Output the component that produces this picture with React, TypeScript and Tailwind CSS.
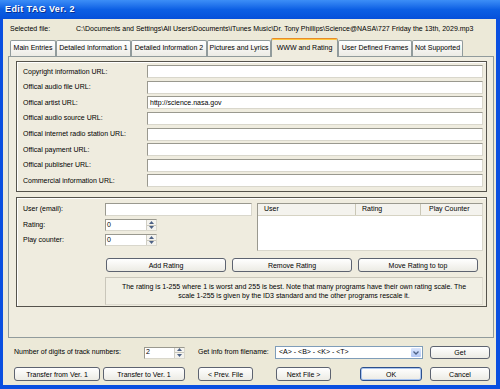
import React from "react";

const urlRows = [
  ["Copyright information URL:", ""],
  ["Offical audio file URL:", ""],
  ["Offical artist URL:", "http://science.nasa.gov"],
  ["Offical audio source URL:", ""],
  ["Offical internet radio station URL:", ""],
  ["Offical payment URL:", ""],
  ["Offical publisher URL:", ""],
  ["Commercial information URL:", ""],
];

const tabs = [
  { label: "Main Entries", w: "w-[46px]" },
  { label: "Detailed Information 1", w: "w-[75px]" },
  { label: "Detailed Information 2", w: "w-[76px]" },
  { label: "Pictures and Lyrics", w: "w-[64px]" },
  { label: "WWW and Rating", w: "w-[67px]", active: true },
  { label: "User Defined Frames", w: "w-[74px]" },
  { label: "Not Supported", w: "w-[51px]" },
];

function Btn({ children, className = "", def = false }: { children: React.ReactNode; className?: string; def?: boolean }) {
  return (
    <div
      className={`flex items-center justify-center rounded-[3px] border bg-linear-to-b from-[#ffffff] to-[#ecebe4] text-[7px] leading-none ${
        def ? "border-[#2c4f8c] shadow-[inset_0_0_0_1px_#a9c4ef]" : "border-[#5d6370]"
      } ${className}`}
    >
      {children}
    </div>
  );
}

function Field({ value = "", className = "" }: { value?: string; className?: string }) {
  return (
    <div
      className={`flex h-[13px] items-center border border-t-[#9a998f] border-l-[#9a998f] border-b-[#d9d7cc] border-r-[#d9d7cc] bg-white pl-[2px] text-[7px] ${className}`}
    >
      {value}
    </div>
  );
}

function Spin({ value, className = "" }: { value: string; className?: string }) {
  return (
    <div
      className={`flex h-[12px] items-stretch border border-t-[#9a998f] border-l-[#9a998f] border-b-[#d9d7cc] border-r-[#d9d7cc] bg-white ${className}`}
    >
      <div className="flex flex-1 items-center pl-[1px] text-[7px]">{value}</div>
      <div className="flex w-[10px] flex-col border-l border-[#d0cec4] bg-[#f4f3ee]">
        <div className="flex flex-1 items-center justify-center border-b border-[#c9c7bc]">
          <svg width="5" height="3" viewBox="0 0 5 3"><path d="M0 3 L2.5 0 L5 3 Z" fill="#4d6185" /></svg>
        </div>
        <div className="flex flex-1 items-center justify-center">
          <svg width="5" height="3" viewBox="0 0 5 3"><path d="M0 0 L2.5 3 L5 0 Z" fill="#4d6185" /></svg>
        </div>
      </div>
    </div>
  );
}

export default function App() {
  return (
    <div className="flex h-[389px] w-[500px] flex-col bg-[#0a4fe0] font-['Liberation_Sans',Arial,sans-serif] text-black">
      {/* title bar */}
      <div className="flex h-[19px] items-center bg-linear-to-b from-[#3c8ef7] via-[#0c5fe4] to-[#0650da] pl-[5px]">
        <span className="text-[9px] font-bold tracking-[0.4px] text-white [text-shadow:1px_1px_0_#0a2f8f]">Edit TAG Ver. 2</span>
      </div>

      <div className="mb-[4px] ml-[3px] mr-[4px] flex flex-1 flex-col bg-[#ece9d8]">
        {/* selected file */}
        <div className="flex h-[20px] items-center pl-[7px] pt-[1px] text-[7px]">
          <span className="w-[66px]">Selected file:</span>
          <span className="whitespace-nowrap">
            C:\Documents and Settings\All Users\Documents\iTunes Music\Dr. Tony Phillips\Science@NASA\727 Friday the 13th, 2029.mp3
          </span>
        </div>

        {/* tabs */}
        <div className="ml-[7px] flex h-[17px] items-end">
          {tabs.map((t) =>
            t.active ? (
              <div
                key={t.label}
                className={`relative z-10 -mb-px flex h-[19px] items-center justify-center rounded-t-[2px] border border-b-0 border-[#919b9c] border-t-[#e68b2c] bg-[#efecdf] pt-[1px] text-[7px] shadow-[inset_0_1px_0_#ffc73c] ${t.w}`}
              >
                {t.label}
              </div>
            ) : (
              <div
                key={t.label}
                className={`flex h-[16px] items-center justify-center rounded-t-[2px] border border-b-0 border-[#919b9c] bg-linear-to-b from-[#ffffff] to-[#ecebe5] pb-[1px] text-[7px] ${t.w}`}
              >
                {t.label}
              </div>
            )
          )}
        </div>

        {/* tab panel */}
        <div className="ml-[5px] mr-[2px] flex h-[282px] flex-col gap-[5px] border border-[#919b9c] bg-[#efecdf] pb-[3px] pl-[7px] pr-[6px] pt-[4px]">
          {/* URL group */}
          <div className="flex h-[131px] flex-col border border-[#55534c] pl-[6px] pr-[3px] pt-[2px] shadow-[inset_1px_1px_0_#ffffff]">
            {urlRows.map(([label, value]) => (
              <div key={label} className="flex h-[15.6px] items-center">
                <span className="w-[124px] text-[7px]">{label}</span>
                <Field value={value} className="flex-1" />
              </div>
            ))}
          </div>

          {/* rating group */}
          <div className="flex h-[110px] flex-col border border-[#55534c] pl-[6px] pr-[3px] pt-[5px] shadow-[inset_1px_1px_0_#ffffff]">
            <div className="flex h-[49px]">
              <div className="flex w-[229px] flex-col gap-[3px]">
                <div className="flex items-center">
                  <span className="w-[82px] text-[7px]">User (email):</span>
                  <Field className="flex-1" />
                </div>
                <div className="flex items-center">
                  <span className="w-[82px] text-[7px]">Rating:</span>
                  <Spin value="0" className="w-[52px]" />
                </div>
                <div className="flex items-center">
                  <span className="w-[82px] text-[7px]">Play counter:</span>
                  <Spin value="0" className="w-[52px]" />
                </div>
              </div>
              <div className="ml-[5px] flex h-[48px] flex-1 flex-col border border-t-[#9a998f] border-l-[#9a998f] border-b-[#d9d7cc] border-r-[#d9d7cc] bg-white">
                <div className="flex h-[12px] border-b border-[#d6d3c3] bg-[#f4f3ee] text-[7px]">
                  <div className="flex w-[98px] items-center border-r border-[#cac7b6] pl-[6px]">User</div>
                  <div className="flex w-[65px] items-center border-r border-[#cac7b6] pl-[6px]">Rating</div>
                  <div className="flex flex-1 items-center pl-[8px]">Play Counter</div>
                </div>
              </div>
            </div>

            <div className="ml-[83px] mt-[6px] flex h-[14px] gap-[6px]">
              <Btn className="w-[120px]">Add Rating</Btn>
              <Btn className="w-[120px]">Remove Rating</Btn>
              <Btn className="w-[120px]">Move Rating to top</Btn>
            </div>

            <div className="ml-[82px] mt-[5px] flex h-[28px] flex-col items-center justify-center border border-[#dedbd0] border-t-[#c9c6ba] border-l-[#c9c6ba] bg-[#f1efe4] text-center text-[7px] leading-[9px]">
              <div>The rating is 1-255 where 1 is worst and 255 is best. Note that many programs have their own rating scale. The</div>
              <div>scale 1-255 is given by the ID3 standard and the other programs rescale it.</div>
            </div>
          </div>
        </div>

        {/* bottom row 1 */}
        <div className="mt-[8px] flex h-[13px] items-center pl-[11px] text-[7px]">
          <span className="w-[130px]">Number of digits of track numbers:</span>
          <Spin value="2" className="w-[41px]" />
          <span className="ml-[13px] w-[77px]">Get info from filename:</span>
          <div className="flex h-[13px] w-[148px] items-stretch border border-[#7f9db9] bg-white">
            <div className="flex flex-1 items-center pl-[3px] text-[7px]">&lt;A&gt; - &lt;B&gt; - &lt;K&gt; - &lt;T&gt;</div>
            <div className="m-[1px] flex w-[10px] items-center justify-center rounded-[1px] bg-linear-to-b from-[#dbe6fd] to-[#b3c8f5]">
              <svg width="6" height="4" viewBox="0 0 6 4"><path d="M0.5 0.5 L3 3 L5.5 0.5" stroke="#4d6185" strokeWidth="1.3" fill="none" /></svg>
            </div>
          </div>
          <Btn className="ml-[7px] h-[13px] w-[60px]">Get</Btn>
        </div>

        {/* bottom row 2 */}
        <div className="mt-[8px] flex h-[14px] items-center pl-[11px]">
          <Btn className="h-[14px] w-[86px]">Transfer from Ver. 1</Btn>
          <Btn className="ml-[3px] h-[14px] w-[82px]">Transfer to Ver. 1</Btn>
          <Btn className="ml-[13px] h-[14px] w-[55px]">&lt; Prev. File</Btn>
          <Btn className="ml-[23px] h-[14px] w-[55px]">Next File &gt;</Btn>
          <Btn def className="ml-[29px] h-[14px] w-[62px]">OK</Btn>
          <Btn className="ml-[8px] h-[14px] w-[60px]">Cancel</Btn>
        </div>
      </div>
    </div>
  );
}
